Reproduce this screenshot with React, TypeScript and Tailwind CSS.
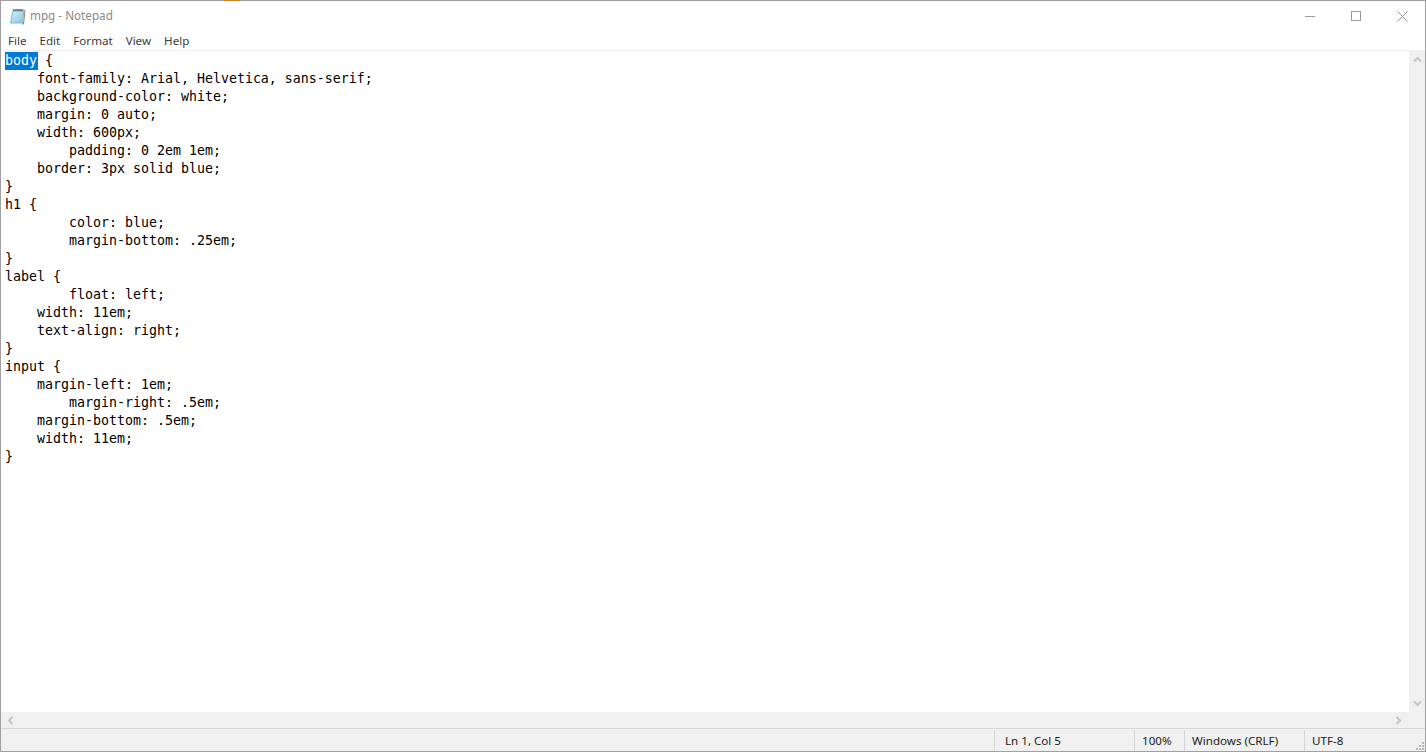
const lines = `body {
    font-family: Arial, Helvetica, sans-serif;
    background-color: white;
    margin: 0 auto;
    width: 600px;
        padding: 0 2em 1em;
    border: 3px solid blue;
}
h1 {
        color: blue;
        margin-bottom: .25em;
}
label {
        float: left;
    width: 11em;
    text-align: right;
}
input {
    margin-left: 1em;
        margin-right: .5em;
    margin-bottom: .5em;
    width: 11em;
}`.split("\n");

const ui = { fontFamily: '"Noto Sans", "Open Sans", sans-serif' };

function NotepadIcon() {
  return (
    <svg width="17" height="17" viewBox="0 0 17 17">
      <defs>
        <linearGradient id="pad" x1="0" y1="0" x2="1" y2="1">
          <stop offset="0" stopColor="#e2f3fa" />
          <stop offset="1" stopColor="#7cc4df" />
        </linearGradient>
      </defs>
      <path d="M5 2.5h11l-1.5 13.5H13" fill="none" stroke="#8d8660" />
      <path d="M4 2h11l-1.5 13H1.5z" fill="url(#pad)" stroke="#86b8cf" />
      <path d="M5 1v2.5M7 1v2.5M9 1v2.5M11 1v2.5M13 1v2.5" stroke="#3c4650" />
    </svg>
  );
}

function Chevron({ dir }: { dir: "up" | "down" | "left" | "right" }) {
  const p = {
    up: "M1 6.5 4.5 3 8 6.5",
    down: "M1 2.5 4.5 6 8 2.5",
    left: "M6.5 1 3 4.5 6.5 8",
    right: "M2.5 1 6 4.5 2.5 8",
  }[dir];
  return (
    <svg width="9" height="9" viewBox="0 0 9 9" fill="none">
      <path d={p} stroke="#c6c6c6" strokeWidth="2" />
    </svg>
  );
}

export default function App() {
  return (
    <div className="relative w-[1426px] h-[752px] flex flex-col bg-white border border-[#a0a0a0] text-[11.6px] text-[#1a1a1a]" style={ui}>
      <div className="h-[30px] shrink-0 flex items-center">
        <div className="ml-[8px] mr-[4px]"><NotepadIcon /></div>
        <span className="text-[11.7px] text-[#8a8a8a]">mpg - Notepad</span>
        <div className="ml-auto flex items-center h-full">
          <div className="w-[46px] flex justify-center">
            <div className="w-[10px] h-px bg-[#9a9a9a]" />
          </div>
          <div className="w-[46px] flex justify-center">
            <div className="w-[10px] h-[10px] border border-[#9a9a9a]" />
          </div>
          <div className="w-[46px] flex justify-center">
            <svg width="11" height="11" viewBox="0 0 11 11"><path d="M.5.5l10 10M10.5.5l-10 10" stroke="#9a9a9a" /></svg>
          </div>
        </div>
      </div>
      <div className="h-[19px] shrink-0 flex items-center pl-[7px] gap-[13px] pt-px text-[#3c3c3c]">
        <span>File</span><span>Edit</span><span>Format</span><span>View</span><span>Help</span>
      </div>
      <div className="h-px shrink-0 bg-[#f0f0f0]" />
      <div className="flex-1 flex min-h-0">
        <div className="flex-1 pl-[4px] pt-px text-[13.29px] leading-[18px] text-black whitespace-pre" style={{ fontFamily: '"DejaVu Sans Mono", "Liberation Mono", monospace' }}>
          {lines.map((l, i) => (
            <div key={i} className="h-[18px]">
              {i === 0 ? (<><span className="bg-[#0078d7] text-white inline-block h-[18px] w-[33px]">body</span><span className="ml-[-1px]">{l.slice(4)}</span></>) : l}
            </div>
          ))}
        </div>
        <div className="w-[16px] shrink-0 bg-[#f0f0f0] flex flex-col justify-between items-center py-[4px]">
          <Chevron dir="up" />
          <Chevron dir="down" />
        </div>
      </div>
      <div className="h-[16px] shrink-0 bg-[#f0f0f0] flex items-center justify-between pl-[5px] pr-[22px]">
        <Chevron dir="left" />
        <Chevron dir="right" />
      </div>
      <div className="h-[23px] shrink-0 bg-[#f0f0f0] border-t border-[#d7d7d7] flex items-stretch relative pt-px">
        <div className="flex-1" />
        <div className="w-[140px] border-l border-[#d7d7d7] pl-[10px] flex items-center">Ln 1, Col 5</div>
        <div className="w-[50px] border-l border-[#d7d7d7] pl-[7px] flex items-center">100%</div>
        <div className="w-[120px] border-l border-[#d7d7d7] pl-[7px] flex items-center">Windows (CRLF)</div>
        <div className="w-[121px] border-l border-[#d7d7d7] pl-[7px] flex items-center">UTF-8</div>
        <svg className="absolute right-0 bottom-0" width="12" height="12" viewBox="0 0 12 12" fill="#b8b8b8">
          <rect x="9" y="3" width="2" height="2" /><rect x="6" y="6" width="2" height="2" /><rect x="9" y="6" width="2" height="2" />
          <rect x="3" y="9" width="2" height="2" /><rect x="6" y="9" width="2" height="2" /><rect x="9" y="9" width="2" height="2" />
        </svg>
      </div>
      <div className="absolute top-[-1px] left-[223px] w-[16px] h-px bg-[#c8862a]" />
    </div>
  );
}
